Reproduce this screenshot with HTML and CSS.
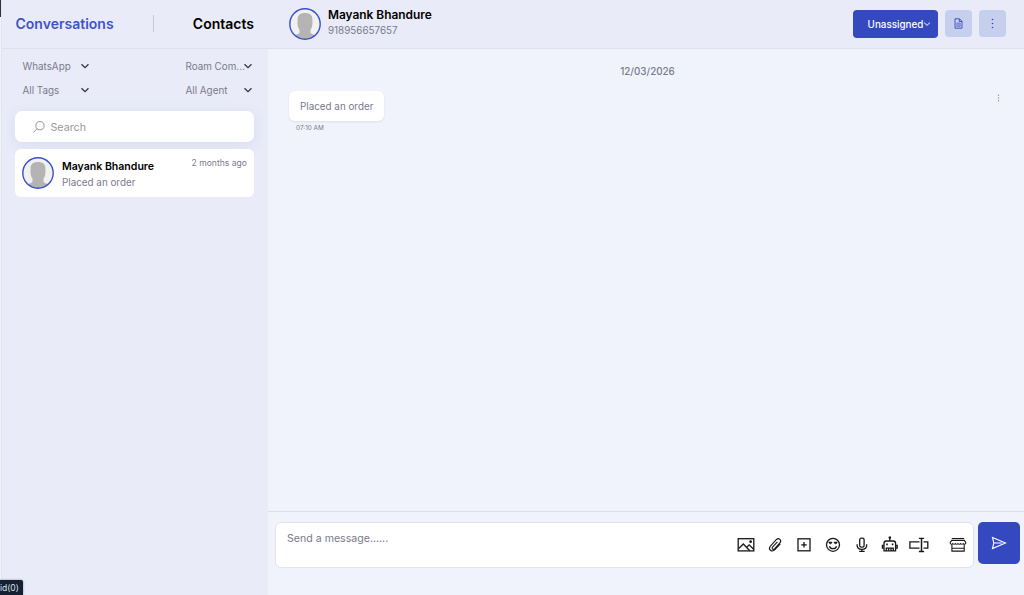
FILE: index.html
```html
<!DOCTYPE html>
<html lang="en">
<head>
    <meta charset="UTF-8">
    <meta name="viewport" content="width=device-width, initial-scale=1.0">
    <title>Conversations</title>
    <link rel="stylesheet" href="styles.css">
</head>
<body>
    <svg class="defs" width="0" height="0">
        <clipPath id="round"><circle cx="16" cy="16" r="15"/></clipPath>
        <symbol id="person" viewBox="0 0 32 32">
            <g clip-path="url(#round)">
                <rect width="32" height="32" fill="#f1f1f1"/>
                <path d="M16 5c-4.800 0-7.400 2-7.400 6.200 0 2-.2 3.200 0 5 .2 2.300.9 4.200 1.900 5.600v2.700c0 1.400-3.500 1.900-5.500 3.300V32h22v-4.200c-2-1.400-5.500-1.900-5.500-3.300v-2.700c1-1.400 1.700-3.300 1.900-5.600.2-1.800 0-3 0-5C23.400 7 20.800 5 16 5z" fill="#b4b4b4"/>
            </g>
            <circle cx="16" cy="16" r="15.200" fill="none" stroke="#3a4ecb" stroke-width="1.400"/>
        </symbol>
        <symbol id="chevron" viewBox="0 0 10 10">
            <path d="M1.500 3.200 5 6.600l3.500-3.400" fill="none" stroke="currentColor" stroke-width="1.300"/>
        </symbol>
    </svg>

    <div class="app">
        <aside class="sidebar">
            <nav class="tabs">
                <a class="tab active">Conversations</a>
                <span class="divider"></span>
                <a class="tab">Contacts</a>
            </nav>
            <div class="filters">
                <div class="filter"><span>WhatsApp</span><svg><use href="#chevron"/></svg></div>
                <div class="filter"><span>Roam Com...</span><svg><use href="#chevron"/></svg></div>
                <div class="filter"><span>All Tags</span><svg><use href="#chevron"/></svg></div>
                <div class="filter"><span>All Agent</span><svg><use href="#chevron"/></svg></div>
            </div>
            <div class="search">
                <svg width="12" height="12" viewBox="0 0 12 12" fill="none" stroke="#8f8a8c" stroke-width="0.9">
                    <circle cx="7" cy="4.700" r="4.100"/>
                    <path d="M4.100 7.700.5 11.400"/>
                </svg>
                <span>Search</span>
            </div>
            <div class="conversation">
                <svg class="avatar"><use href="#person"/></svg>
                <div class="info">
                    <div class="name">Mayank Bhandure</div>
                    <div class="preview">Placed an order</div>
                </div>
                <span class="ago">2 months ago</span>
            </div>
        </aside>

        <main class="chat">
            <header class="chat-header">
                <svg class="avatar"><use href="#person"/></svg>
                <div class="info">
                    <div class="name">Mayank Bhandure</div>
                    <div class="phone">918956657657</div>
                </div>
                <button class="assign">Unassigned<svg><use href="#chevron"/></svg></button>
                <button class="tool">
                    <svg width="9" height="11" viewBox="0 0 9 11" fill="none" stroke="#3448c0" stroke-width="0.9">
                        <path d="M1 .8h4.500L8 3.300v6.900H1zM5.300.8v2.700H8"/>
                        <path d="M2.800 5h3.400v3.600H2.800z" fill="#8f9bdc" stroke="#7382d4"/>
                    </svg>
                </button>
                <button class="tool">
                    <svg width="3" height="11" viewBox="0 0 3 11" fill="#3448c0">
                        <circle cx="1.500" cy="1.500" r="0.800"/><circle cx="1.500" cy="5.500" r="0.800"/><circle cx="1.500" cy="9.500" r="0.800"/>
                    </svg>
                </button>
            </header>

            <section class="messages">
                <div class="date">12/03/2026</div>
                <div class="message">
                    <div>
                        <div class="bubble">Placed an order</div>
                        <div class="time">07:10 AM</div>
                    </div>
                    <svg class="more" width="3" height="8" viewBox="0 0 3 8" fill="#8b8e9a">
                        <circle cx="1.500" cy="1.200" r="0.700"/><circle cx="1.500" cy="4" r="0.700"/><circle cx="1.500" cy="6.800" r="0.700"/>
                    </svg>
                </div>
            </section>

            <footer class="composer">
                <div class="input-box">
                    <span class="placeholder">Send a message......</span>
                    <div class="icons">
                        <!-- image -->
                        <svg viewBox="0 0 20 20">
                            <rect x="2.200" y="3.700" width="15.600" height="12.200"/>
                            <path d="m2.500 13.800 4.800-4.800 6.500 6.700M10.800 12.200l2.400-2.400 4.400 4.400"/>
                            <circle cx="14.600" cy="6.700" r="0.700" fill="currentColor"/>
                        </svg>
                        <!-- attachment -->
                        <svg viewBox="0 0 20 20">
                            <path d="m15.300 8.800-5.400 5.900c-3.100 3-7.200-.4-4.500-3.700l5.900-6.300c2.500-2.500 5.800.5 3.600 3.200l-5.400 5.900c-1.500 1.400-3.200-.1-2-1.700l4.900-5.200" stroke-width="1.100"/>
                        </svg>
                        <!-- template -->
                        <svg viewBox="0 0 20 20">
                            <rect x="4" y="3.800" width="12" height="12"/>
                            <path d="M10 7v5.600M7.200 9.800h5.600"/>
                        </svg>
                        <!-- emoji -->
                        <svg viewBox="0 0 20 20">
                            <circle cx="10" cy="9.800" r="6.500"/>
                            <path d="M6.400 11.200c1.100 3.300 6.100 3.300 7.200 0"/>
                            <path d="M5.900 7h3v1L7.400 9 5.900 8zM11.100 7h3v1l-1.500 1-1.500-1z" fill="currentColor" stroke-width="0.500"/>
                        </svg>
                        <!-- microphone -->
                        <svg viewBox="0 0 20 20">
                            <rect x="7.700" y="3.200" width="4.400" height="9" rx="1.600"/>
                            <path d="M5.100 9.200v1.100c0 5.400 9.600 5.400 9.600 0V9.200M9.900 14.300v2.200M7.200 16.400h5.400"/>
                        </svg>
                        <!-- bot -->
                        <svg viewBox="0 0 20 20">
                            <path d="M9.800 2.500v3.300M4 15.900V8.400q0-2.400 2.400-2.400h6.800q2.400 0 2.400 2.400v7.500zM4 10.300H2.400v2.800H4M15.600 10.300h1.600v2.800h-1.600M6.300 15.900v-2.800h7v2.800M8.600 13.100v2.800M11 13.100v2.800"/>
                            <path d="M7 8.600v1.700M12.600 8.600v1.700" stroke-width="1.600"/>
                            <circle cx="9.800" cy="2.600" r="0.700" fill="currentColor"/>
                        </svg>
                        <!-- text field -->
                        <svg viewBox="0 0 20 20">
                            <path d="M10.500 6.900H.9v6.200h9.600M14.500 6.900h4.300v6.200h-4.300M9.900 3.400h5.200M9.900 16.500h5.200"/>
                            <path d="M12.500 3.500v13" stroke-width="1.500"/>
                        </svg>
                        <!-- store -->
                        <svg class="store" viewBox="0 0 20 20">
                            <path d="M3.800 3.500h12.400M3.800 5.400h12.400l1.500 1.800v1.300q-1.300 1.400-2.500 0-1.300 1.400-2.600 0-1.300 1.400-2.600 0-1.300 1.400-2.600 0-1.300 1.400-2.600 0-1.200 1.400-2.500 0V7.200zM3.900 9.800v6.300h12.300V9.800M4 13.200h12" stroke-width="1.100"/>
                        </svg>
                    </div>
                </div>
                <button class="send">
                    <svg width="16" height="14" viewBox="0 0 16 14" fill="none" stroke="#fff" stroke-width="1.100">
                        <path d="m1.500 1.500 13 5.500-13 5.500 1.300-5.500zM2.800 7h8"/>
                    </svg>
                </button>
            </footer>
        </main>
    </div>
    <div class="edge"></div>
    <div class="status">id(0)</div>
</body>
</html>
```
FILE: styles.css
```css
* {
    box-sizing: border-box;
}

body {
    margin: 0;
    height: 100vh;
    overflow: hidden;
    background: #f0f3fb;
    color: #797a8c;
    font-family: Inter, "Liberation Sans", sans-serif;
    font-size: 9.850px;
}

button {
    border: 0;
    padding: 0;
    display: flex;
    align-items: center;
    justify-content: center;
    font-family: inherit;
}

.defs {
    position: absolute;
}

.app {
    display: flex;
    height: 100vh;
    padding-left: 1px;
}

/* Sidebar */
.sidebar {
    width: 267px;
    flex-shrink: 0;
    background: #e9ebf8;
    border-left: 1px solid #e3e5ec;
}

.tabs {
    height: 49px;
    display: flex;
    align-items: center;
    justify-content: space-between;
    padding: 0 14px 1px 13.500px;
    border-bottom: 1px solid #e0e2e9;
}

.tab {
    font-size: 14px;
    font-weight: 600;
    color: #000;
}

.tab.active {
    color: #4054c8;
}

.divider {
    width: 1px;
    height: 17px;
    background: #c6c8d2;
}

.filters {
    display: grid;
    grid-template-columns: 163px 68px;
    grid-auto-rows: 24px;
    padding: 5px 0 0 20.500px;
}

.filter {
    display: flex;
    align-items: center;
    justify-content: space-between;
    width: 67px;
    white-space: nowrap;
}

.filter span {
    width: 57px;
}

.filter svg {
    width: 10px;
    height: 10px;
    flex-shrink: 0;
    color: #33343f;
}

.search {
    display: flex;
    align-items: center;
    gap: 6px;
    height: 31px;
    margin: 9px 14px 7px 13px;
    padding-left: 17.500px;
    border-radius: 7px;
    background: #fff;
    box-shadow: 0 3px 14px rgba(110, 135, 205, 0.14);
    font-size: 10.700px;
    color: #9b9696;
}

.search span {
    padding-top: 1px;
}

.conversation {
    display: flex;
    height: 48px;
    margin: 0 14px 0 13px;
    padding: 8px 7px;
    border-radius: 6px;
    background: #fff;
}

.avatar {
    width: 32px;
    height: 32px;
    flex-shrink: 0;
}

.info {
    flex: 1;
    margin-left: 8px;
}

.name {
    font-weight: 600;
    color: #000;
}

.conversation .name {
    font-size: 10.550px;
    line-height: 16px;
    margin-top: 2px;
}

.preview {
    line-height: 15px;
}

.ago {
    font-size: 8.600px;
    line-height: 13px;
}

/* Chat */
.chat {
    flex: 1;
    display: flex;
    flex-direction: column;
}

.chat-header {
    display: flex;
    align-items: center;
    height: 49px;
    padding: 0 18px 1px 21px;
    background: #e9ebf8;
    border-bottom: 1px solid #e0e2e9;
}

.chat-header .info {
    margin: -4px 0 0 7px;
}

.chat-header .name {
    font-size: 11.900px;
    line-height: 17px;
}

.phone {
    line-height: 15px;
}

.assign {
    width: 85px;
    height: 28px;
    padding-left: 8px;
    border-radius: 4px;
    background: #3448c0;
    color: #fff;
    font-size: 9.850px;
    font-weight: 500;
}

.assign svg {
    width: 8px;
    height: 8px;
    color: #c9d0f2;
}

.tool {
    width: 27px;
    height: 27px;
    margin-left: 7px;
    border-radius: 4px;
    background: #c7cfee;
}

.messages {
    flex: 1;
    padding: 15px 24px 0 21px;
}

.date {
    padding-left: 6px;
    text-align: center;
    line-height: 14px;
    font-weight: 500;
}

.message {
    display: flex;
    justify-content: space-between;
    margin-top: 13px;
}

.bubble {
    height: 30px;
    padding: 0 11px;
    line-height: 30px;
    border-radius: 6px;
    background: #fff;
    box-shadow: 0 1px 2px rgba(60, 80, 120, 0.12);
}

.time {
    margin: 3px 0 0 7px;
    font-size: 6.400px;
    line-height: 9px;
}

.more {
    margin-top: 3px;
}

.composer {
    display: flex;
    align-items: flex-start;
    gap: 4px;
    height: 84px;
    padding: 10px 4px 0 7px;
    border-top: 1px solid #dcdfe6;
}

.input-box {
    flex: 1;
    display: flex;
    justify-content: space-between;
    height: 46px;
    padding: 0 5px 0 11px;
    border: 1px solid #e1e3e9;
    border-radius: 6px;
    background: #fff;
}

.placeholder {
    font-size: 10.600px;
    line-height: 31px;
}

.icons {
    display: flex;
    align-items: center;
    gap: 8.800px;
}

.icons svg {
    width: 20px;
    height: 20px;
    fill: none;
    stroke: currentColor;
    stroke-width: 1.300;
    color: #18181b;
}

.icons .store {
    margin-left: 10px;
}

.send {
    width: 42px;
    height: 42px;
    border-radius: 5px;
    background: #3448c0;
}

/* Sits over the page corners */
.edge {
    position: absolute;
    top: 0;
    left: 0;
    width: 1px;
    height: 17px;
    background: #30323c;
}

.status {
    position: absolute;
    left: 0;
    bottom: 0;
    width: 23px;
    height: 15px;
    border-top-right-radius: 2px;
    background: #152033;
    box-shadow: 0 0 2px rgba(20, 30, 50, 0.5);
    color: #dfe3ea;
    font-size: 8.500px;
    line-height: 16px;
}
```
